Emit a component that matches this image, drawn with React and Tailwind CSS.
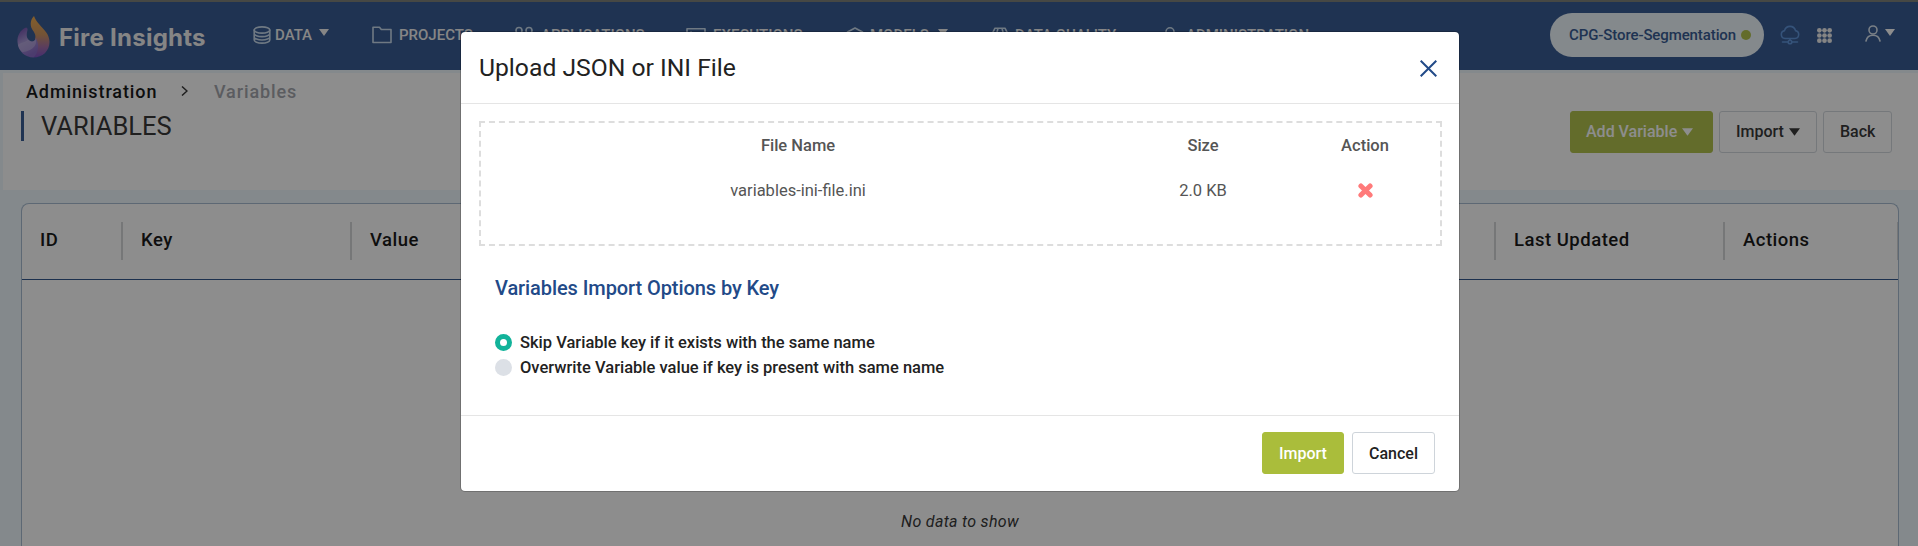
import React from "react";

const Caret = ({ className = "" }) => (
  <svg viewBox="0 0 10 7" className={className} fill="currentColor">
    <path d="M0 0h10L5 7z" />
  </svg>
);

const Svg = ({ children, className = "", viewBox = "0 0 20 20" }) => (
  <svg viewBox={viewBox} className={className} fill="none" stroke="currentColor" strokeWidth="1.6" strokeLinecap="round" strokeLinejoin="round">
    {children}
  </svg>
);

const Logo = () => (
  <svg viewBox="0 0 33 42" className="h-[42px] w-[33px]">
    <defs>
      <linearGradient id="flame" x1="0" y1="0" x2="0" y2="1">
        <stop offset="0" stopColor="#eda23a" />
        <stop offset="0.45" stopColor="#c98a50" />
        <stop offset="0.75" stopColor="#9a5fa0" />
        <stop offset="1" stopColor="#7040c0" />
      </linearGradient>
      <linearGradient id="swirl" x1="0" y1="0" x2="0.4" y2="1">
        <stop offset="0" stopColor="#5a2f9e" />
        <stop offset="0.5" stopColor="#9c8bd0" />
        <stop offset="1" stopColor="#7d5cc0" />
      </linearGradient>
    </defs>
    <path d="M17 0C18 3 19.500 5 22 8C27 14 32.500 18 32.500 26C32.500 35 25.500 41.500 16.500 41.500L18 23C19.500 19 17 16 15 13C12.500 8 14 3 17 0Z" fill="url(#flame)" />
    <path d="M9 11.500C3 14 0 20 0.500 26C1 35 8 41.500 16.500 41.500C21 37 23 30 19 22C18 25 15.500 26.500 12.500 24.500C9 22 9.500 18 10.500 14C10.800 12.500 10 11.500 9 11.500Z" fill="url(#swirl)" />
    <path d="M1 29C5 25.500 8 27 11 23.500C14 26.500 17.500 26 18.700 23C21 31 12 36 5 36C3 34 1.500 32 1 29Z" fill="#bbaee0" opacity="0.55" />
  </svg>
);

const icons = {
  db: (
    <Svg className="h-[18px] w-[18px]" viewBox="0 0 18 18">
      <ellipse cx="9" cy="4" rx="7.800" ry="3.100" />
      <path d="M1.200 4v10c0 1.700 3.500 3.100 7.800 3.100s7.800-1.400 7.800-3.100V4M1.200 7.500c0 1.700 3.500 3.100 7.800 3.100s7.800-1.400 7.800-3.100M1.200 10.900c0 1.700 3.500 3.100 7.800 3.100s7.800-1.400 7.800-3.100" />
    </Svg>
  ),
  folder: (
    <Svg className="h-[18px] w-5" viewBox="0 0 20 18">
      <path d="M1 16.500V1.200h6.500l1.800 2.300H19v13z" />
    </Svg>
  ),
  apps: (
    <Svg className="h-[18px] w-[18px]" viewBox="0 0 18 18">
      <circle cx="4" cy="4.500" r="3" />
      <circle cx="14" cy="4.500" r="3" />
      <circle cx="4" cy="14" r="3" />
      <circle cx="14" cy="14" r="3" />
    </Svg>
  ),
  exec: (
    <Svg className="h-[18px] w-5" viewBox="0 0 20 18">
      <path d="M1 2.800h18v13H1zM5 6l3 3-3 3" />
    </Svg>
  ),
  model: (
    <Svg className="h-[18px] w-[18px]" viewBox="0 0 18 18">
      <path d="M9 2l7.500 4v7.500L9 17.500l-7.500-4V6zM1.500 6L9 10l7.500-4M9 10v7.500" />
    </Svg>
  ),
  quality: (
    <Svg className="h-[18px] w-[18px]" viewBox="0 0 18 18">
      <path d="M4 2.200h10l3 6L9 17 1 8.200zM1 8.200h16M7 2.200L5.500 8.200 9 17l3.500-8.800L11 2.200" />
    </Svg>
  ),
  user: (
    <Svg className="h-[18px] w-4" viewBox="0 0 16 18">
      <circle cx="8" cy="5.800" r="4" />
      <path d="M1 17c.5-4 3-6 7-6s6.500 2 7 6" />
    </Svg>
  ),
};

const nav = [
  ["DATA", icons.db, "w-[119px] gap-[4px]", true],
  ["PROJECTS", icons.folder, "w-[143px] gap-[7px]", false],
  ["APPLICATIONS", icons.apps, "w-[171px] gap-[8px]", false],
  ["EXECUTIONS", icons.exec, "w-[160px] gap-[7px]", false],
  ["MODELS", icons.model, "w-[145px] gap-[6px]", true],
  ["DATA QUALITY", icons.quality, "w-[171px] gap-[6px]", false],
  ["ADMINISTRATION", icons.user, "w-[160px] gap-[8px]", false],
];

const columns = [
  ["ID", "w-[101px]"],
  ["Key", "w-[229px]"],
  ["Value", "w-[229px]"],
  ["Type", "w-[229px]"],
  ["Description", "w-[457px]"],
  ["Created By", "w-[229px]"],
  ["Last Updated", "w-[229px]"],
  ["Actions", "w-[174px]"],
];

const btn = "flex h-[42px] items-center rounded-[3px] border text-[16px] font-medium";

function Header() {
  return (
    <header className="flex h-[70px] items-center border-t-2 border-[#70746c] bg-[#224a88] pb-[2px] pl-[17px] text-white">
      <div className="flex w-[236px] shrink-0 items-center pt-[4px] text-[#eeeeee]">
        <Logo />
        <span className="ml-[9px] whitespace-nowrap pt-[1px] font-['Inter'] text-[24px] font-bold tracking-[0.25px]">Fire Insights</span>
      </div>
      <nav className="flex text-[15px] font-medium text-[#f0f0f0]">
        {nav.map(([label, icon, cls, caret]) => (
          <div key={label} className={`flex shrink-0 items-center ${cls}`}>
            <span className="shrink-0 text-[#c3d7ea]">{icon}</span>
            <span className="whitespace-nowrap">{label}</span>
            {caret && <Caret className="mb-[5px] ml-[3px] h-[7px] w-[10px] shrink-0" />}
          </div>
        ))}
      </nav>
      <div className="ml-auto flex items-center pr-[23px]">
        <div className="flex h-[44px] w-[214px] items-center gap-[5px] rounded-full bg-[#ecf6fc] pl-[19px] text-[15px] font-medium text-[#224a88]">
          <span className="whitespace-nowrap tracking-[-0.1px]">CPG-Store-Segmentation</span>
          <span className="h-[10px] w-[10px] rounded-full bg-[#aabd3b]" />
        </div>
        <Svg className="ml-[16px] h-[20px] w-[20px] text-[#4f8ad8]">
          <path d="M5 13.500a4 4 0 0 1-.5-7.900 5.700 5.700 0 0 1 11 0 4 4 0 0 1-.5 7.900zM10 13.500v2M2.500 17H8M12 17h5.500" />
          <circle cx="10" cy="17" r="1.800" />
        </Svg>
        <svg viewBox="0 0 16 16" className="ml-[17px] h-[15px] w-[15px] fill-[#eeeeee]">
          {[2.5, 8, 13.5].map((y) => [2.5, 8, 13.5].map((x) => <circle key={`${x}-${y}`} cx={x} cy={y} r="2.500" />))}
        </svg>
        <Svg className="mb-[4px] ml-[33px] h-[17px] w-4 text-[#d6e3f0]" viewBox="0 0 16 17">
          <circle cx="8" cy="5" r="4" />
          <path d="M1 16c.8-4 3.500-5.800 7-5.800s6.200 1.800 7 5.800" />
        </Svg>
        <Caret className="mb-[5px] ml-[4px] h-[7px] w-[10px]" />
      </div>
    </header>
  );
}

function PageHead() {
  return (
    <section className="ml-[3px] mt-[3px] flex h-[117px] justify-between bg-white">
      <div>
        <div className="flex h-[38px] items-center pb-[2px] pl-[23px] text-[18px] font-medium tracking-[0.9px]">
          <span className="w-[155px]">Administration</span>
          <svg viewBox="0 0 7 10" className="w-[7px] fill-none stroke-[#222] stroke-[1.500]">
            <path d="M1 0.500L6 5l-5 4.500" />
          </svg>
          <span className="ml-[26px] text-[#9a9da5]">Variables</span>
        </div>
        <h1 className="ml-[18px] flex h-[30px] items-center border-l-[3px] border-[#224a88] pl-[17px] pt-[1px] text-[25.500px] text-[#222]">VARIABLES</h1>
      </div>
      <div className="flex gap-[6px] pr-[26px] pt-[38px] text-[#222]">
        <button className={`${btn} w-[143px] gap-[5px] border-[#aabd3b] bg-[#aabd3b] pl-[15px] text-white`}>
          Add Variable <Caret className="h-[8px] w-[11px]" />
        </button>
        <button className={`${btn} w-[98px] gap-[5px] border-[#ced4da] pl-[16px]`}>
          Import <Caret className="h-[8px] w-[11px]" />
        </button>
        <button className={`${btn} w-[69px] border-[#ced4da] pl-[16px]`}>Back</button>
      </div>
    </section>
  );
}

function Table() {
  return (
    <section className="ml-[21px] mr-[19px] mt-[13px] h-[343px] shrink-0 overflow-hidden rounded-t-[8px] border border-b-0 border-[#9fb5cc] bg-white">
      <div className="flex h-[76px] items-start border-b border-[#1d4480] pt-[18px] text-[18.500px] font-medium tracking-[0.5px] text-black">
        {columns.map(([label, w]) => (
          <div key={label} className={`${w} flex h-[38px] shrink-0 items-center border-r-2 border-[#d0d2d4] pb-[1px] pl-[18px]`}>{label}</div>
        ))}
      </div>
      <p className="pt-[230px] text-center text-[16px] italic tracking-[0.3px] text-[#222]">No data to show</p>
    </section>
  );
}

function Modal() {
  return (
    <div className="absolute left-[460px] top-[31px] flex h-[461px] w-[1000px] flex-col rounded-[5px] border border-black/20 bg-white bg-clip-padding text-[#222]">
      <div className="flex h-[72px] shrink-0 items-center justify-between border-b border-[#e5e5e5] pl-[18px] pr-[22px] text-[24.700px]">
        <h2>Upload JSON or INI File</h2>
        <svg viewBox="0 0 17 17" className="mt-[2px] w-[17px] fill-none stroke-[#224a88] stroke-2">
          <path d="M0.700 0.700l15.600 15.600M16.300 0.700L0.700 16.300" />
        </svg>
      </div>
      <div className="h-[311px] shrink-0 px-[18px] pt-[17px]">
        <div className="grid h-[125px] w-[963px] grid-cols-[634px_176px_148px] grid-rows-[45px_45px] border-2 border-dashed border-[#ddd] text-center text-[16.500px] leading-[45px] text-[#555]">
          <b className="font-medium">File Name</b>
          <b className="font-medium">Size</b>
          <b className="font-medium">Action</b>
          <span>variables-ini-file.ini</span>
          <span>2.0 KB</span>
          <span className="flex items-center justify-center">
            <svg viewBox="0 0 15 15" className="w-[15px] fill-none stroke-[#ff7a7a] stroke-[5]" strokeLinecap="round">
              <path d="M2.900 2.900l9.200 9.200M12.100 2.900l-9.200 9.200" />
            </svg>
          </span>
        </div>
        <h3 className="mt-[27px] pl-[16px] text-[20px] font-medium leading-[30px] tracking-[-0.080px] text-[#224a88]">Variables Import Options by Key</h3>
        <div className="mt-[27px] pl-[16px] text-[16.500px] font-medium">
          <label className="flex h-[25px] items-center gap-[8px]">
            <span className="h-[17px] w-[17px] rounded-full border-[5.500px] border-[#12b39a] bg-white" />
            <span className="pt-[2px]">Skip Variable key if it exists with the same name</span>
          </label>
          <label className="flex h-[25px] items-center gap-[8px]">
            <span className="h-[17px] w-[17px] rounded-full bg-[#dce0e6]" />
            <span className="pt-[2px]">Overwrite Variable value if key is present with same name</span>
          </label>
        </div>
      </div>
      <div className="flex flex-1 justify-end gap-[8px] border-t border-[#e5e5e5] pr-[24px] pt-[16px]">
        <button className={`${btn} w-[82px] justify-center border-[#aabd3b] bg-[#aabd3b] pt-[2px] font-bold text-white`}>Import</button>
        <button className={`${btn} w-[83px] justify-center border-[#ced4da] pt-[2px]`}>Cancel</button>
      </div>
    </div>
  );
}

export default function App() {
  return (
    <div className="relative flex h-[546px] w-[1918px] flex-col overflow-hidden bg-[#ecf6fc] font-['Roboto',sans-serif]">
      <Header />
      <PageHead />
      <Table />
      <div className="absolute inset-0 bg-[#1c1c1c]/50" />
      <Modal />
    </div>
  );
}
